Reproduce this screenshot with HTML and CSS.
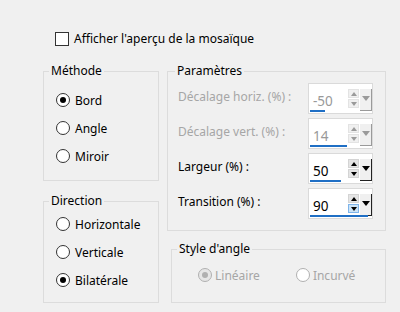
FILE: index.html
```html
<!DOCTYPE html>
<html lang="fr">
<head>
<meta charset="utf-8">
<link rel="stylesheet" href="styles.css">
</head>
<body>
<div class="dlg">
  <label class="chk"><span class="cbox"></span><span>Afficher l'aperçu de la mosaïque</span></label>
  <div class="cols">
    <div class="col left">
      <fieldset class="grp methode">
        <legend>Méthode</legend>
        <div class="radio on"><span class="dot"></span><span>Bord</span></div>
        <div class="radio"><span class="dot"></span><span>Angle</span></div>
        <div class="radio"><span class="dot"></span><span>Miroir</span></div>
      </fieldset>
      <fieldset class="grp direction">
        <legend>Direction</legend>
        <div class="radio"><span class="dot"></span><span>Horizontale</span></div>
        <div class="radio"><span class="dot"></span><span>Verticale</span></div>
        <div class="radio on"><span class="dot"></span><span>Bilatérale</span></div>
      </fieldset>
    </div>
    <div class="col right">
      <fieldset class="grp params">
        <legend>Paramètres</legend>
        <div class="row dis">
          <span class="lbl">Décalage horiz. (%) :</span>
          <div class="spin">
            <span class="val">-50</span>
            <span class="btns"><span class="b up"></span><span class="b down"></span></span>
            <span class="drop"></span>
            <span class="bar" style="width:15px"></span>
          </div>
        </div>
        <div class="row dis">
          <span class="lbl">Décalage vert. (%) :</span>
          <div class="spin">
            <span class="val">14</span>
            <span class="btns"><span class="b up"></span><span class="b down"></span></span>
            <span class="drop"></span>
            <span class="bar" style="width:37px"></span>
          </div>
        </div>
        <div class="row">
          <span class="lbl">Largeur (%) :</span>
          <div class="spin">
            <span class="val">50</span>
            <span class="btns"><span class="b up"></span><span class="b down"></span></span>
            <span class="drop"></span>
            <span class="bar" style="width:31px"></span>
          </div>
        </div>
        <div class="row">
          <span class="lbl">Transition (%) :</span>
          <div class="spin">
            <span class="val">90</span>
            <span class="btns"><span class="b up"></span><span class="b down hot"></span></span>
            <span class="drop"></span>
            <span class="bar" style="width:58px"></span>
          </div>
        </div>
      </fieldset>
      <fieldset class="grp style">
        <legend>Style d'angle</legend>
        <div class="hradios">
          <div class="radio on dis"><span class="dot"></span><span>Linéaire</span></div>
          <div class="radio dis"><span class="dot"></span><span>Incurvé</span></div>
        </div>
      </fieldset>
    </div>
  </div>
</div>
</body>
</html>
```

FILE: styles.css
```css
html, body {
  margin: 0;
  padding: 0;
  background: #f0f0f0;
  width: 400px;
  height: 312px;
  overflow: hidden;
}
body {
  font-family: "Noto Sans", "Open Sans", sans-serif;
  font-size: 12px;
  color: #000;
}
.dlg {
  padding: 31px 0 0 43px;
}
.chk {
  display: flex;
  align-items: center;
  gap: 5px;
  margin-left: 12px;
  height: 16px;
  line-height: 16px;
  font-size: 12px;
}
.cbox {
  width: 12px;
  height: 12px;
  border: 1px solid #333;
  background: #fff;
}
.cols {
  display: flex;
  gap: 8px;
  margin-top: 16px;
}
.col {
  display: flex;
  flex-direction: column;
}
.left { width: 116px; }
.right { width: 219px; }
.grp {
  margin: 0;
  border: 1px solid #dcdcdc;
  min-width: 0;
  padding: 0;
}
.grp legend {
  padding: 0 2px;
  line-height: 16px;
  height: 16px;
}
.methode { padding: 7px 0 10px 12px; }
.direction { margin-top: 12px; padding: 1px 0 8px 12px; }
.methode legend, .direction legend { margin-left: -7px; }
.radio {
  display: flex;
  align-items: center;
  gap: 5px;
  height: 28px;
}
.dot {
  width: 12px;
  height: 12px;
  border: 1px solid #333;
  border-radius: 50%;
  background: #fff;
  display: flex;
  align-items: center;
  justify-content: center;
}
.radio.on .dot::after {
  content: "";
  width: 6px;
  height: 6px;
  border-radius: 50%;
  background: #000;
}
.params { padding: 4px 12px 11px 10px; display: flex; flex-direction: column; gap: 4px; }
.params legend { margin-left: -3px; }
.row {
  display: flex;
  align-items: center;
  height: 31px;
}
.lbl {
  width: 130px;
  padding-bottom: 4px;
}
.row.dis .lbl { color: #a6a6a6; }
.spin {
  position: relative;
  display: flex;
  width: 63px;
  height: 29px;
  border: 1px solid #dadada;
  background: #fff;
}
.val {
  flex: 1;
  font-size: 13.5px;
  padding: 9px 0 0 4px;
  line-height: 16px;
}
.row.dis .val { color: #999; }
.btns {
  width: 11px;
  display: flex;
  flex-direction: column;
  margin: 5px 1px 5px 0;
  gap: 1px;
}
.b {
  flex: 1;
  background: #e5e5e5;
  border: 1px solid #d4d4d4;
  display: flex;
  align-items: center;
  justify-content: center;
}
.b.hot { background: #cce4f7; border-color: #7eb4ea; }
.b.up::after {
  content: "";
  border-left: 3px solid transparent;
  border-right: 3px solid transparent;
  border-bottom: 4px solid #000;
}
.b.down::after {
  content: "";
  border-left: 3px solid transparent;
  border-right: 3px solid transparent;
  border-top: 4px solid #000;
}
.row.dis .b.up::after { border-bottom-color: #9a9a9a; }
.row.dis .b.down::after { border-top-color: #9a9a9a; }
.row.dis .b { background: #f0f0f0; border-color: #e3e3e3; }
.drop {
  width: 12px;
  background: #f0f0f0;
  border-right: 1px solid #222;
  border-bottom: 1px solid #222;
  margin: 5px 0 2px 0;
  display: flex;
  justify-content: center;
  padding-top: 7px;
  box-sizing: border-box;
}
.drop::after {
  content: "";
  height: 0;
  border-left: 4px solid transparent;
  border-right: 4px solid transparent;
  border-top: 5px solid #000;
}
.row.dis .drop { border-color: #9a9a9a; }
.row.dis .drop::after { border-top-color: #9a9a9a; }
.bar {
  position: absolute;
  left: 1px;
  bottom: 1px;
  height: 2px;
  background: #1f6fc5;
}
.style {
  margin-top: 10px;
  margin-left: 4px;
  padding: 8px 0 17px 26px;
}
.style legend { margin-left: -21px; }
.hradios {
  display: flex;
  gap: 36px;
}
.hradios .radio { height: 20px; gap: 3px; }
.radio.dis { color: #a6a6a6; }
.radio.dis .dot { border-color: #b0b0b0; }
.radio.on.dis .dot { background: #e6e6e6; }
.radio.on.dis .dot::after { background: #b0b0b0; }
```
